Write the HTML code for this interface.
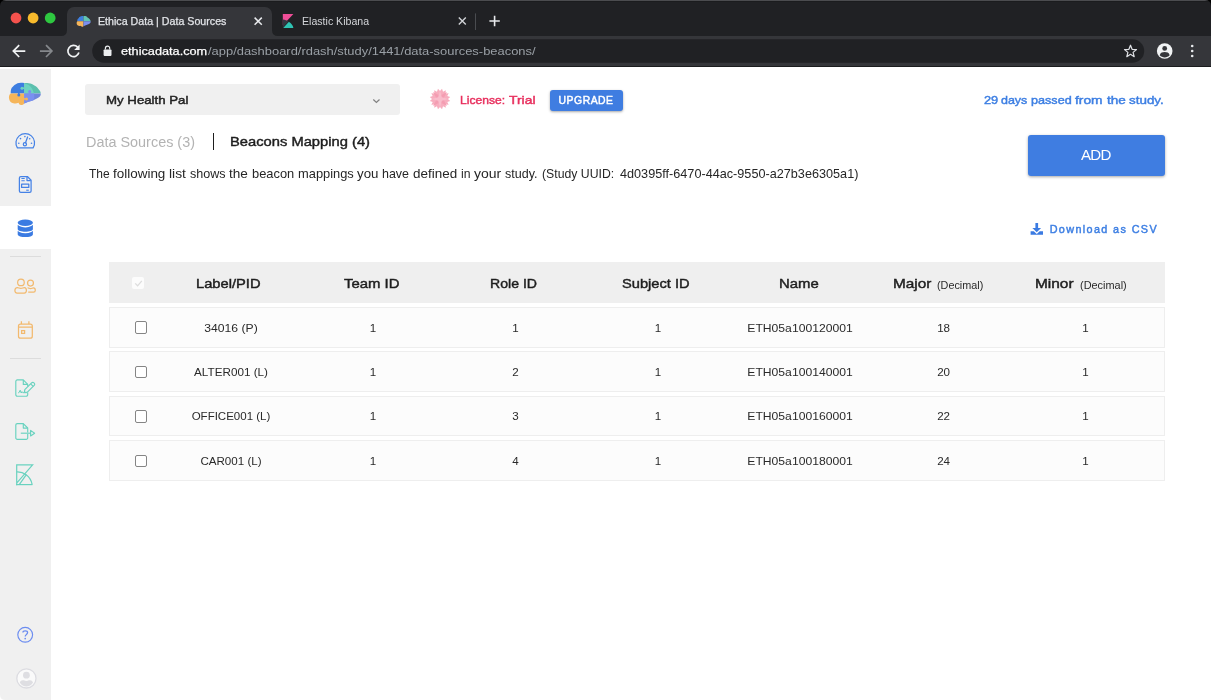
<!DOCTYPE html>
<html><head><meta charset="utf-8"><title>Ethica Data | Data Sources</title>
<style>
html,body{margin:0;padding:0;}
body{width:1211px;height:700px;position:relative;overflow:hidden;background:#fff;font-family:"Liberation Sans",sans-serif;}
#root{position:absolute;left:0;top:0;width:1211px;height:700px;overflow:hidden;will-change:transform;background:#fff;}
.a{position:absolute;}
.t{position:absolute;white-space:nowrap;line-height:20px;height:20px;font-family:"Liberation Sans",sans-serif;}
.t.c{transform:translateX(-50%);font-size:11.6px;color:#2a2a2a;}
svg{position:absolute;overflow:visible;}
/* chrome */
#chrome{left:0;top:0;width:1211px;height:66px;background:#202124;}
#toolbar{left:0;top:36px;width:1211px;height:29.5px;background:#35363a;}
#chromeline{left:0;top:65.5px;width:1211px;height:1.8px;background:#1b1c1e;}
#tab1{left:67px;top:7px;width:205px;height:29px;background:#35363a;border-radius:7px 7px 0 0;}
.tl{width:11px;height:11px;border-radius:50%;top:12.5px;}

/* sidebar */
#side{left:0;top:69px;width:51px;height:631px;background:#f0f0f0;}
#sideact{left:0;top:205.8px;width:51px;height:43.7px;background:#fff;}
.sep{left:10.2px;width:30.8px;height:1.4px;background:#dcdcdc;}
/* content */
#sel{left:85.3px;top:84.3px;width:314.5px;height:31px;background:#f0f0f0;border-radius:3px;}
#upg{left:549.6px;top:90.1px;width:73.2px;height:20.6px;background:#3f7de1;border-radius:3px;box-shadow:0 1px 2.5px rgba(0,0,0,.35);}
#add{left:1028.2px;top:135px;width:136.8px;height:41.2px;background:#3f7de1;border-radius:3px;box-shadow:0 1px 3px rgba(0,0,0,.35);}
#bar{left:212.6px;top:133.3px;width:1.9px;height:16.9px;background:#1e1e1e;}
#thead{left:109.4px;top:262.4px;width:1055.4px;height:40.4px;background:#efefef;}
.row{left:109.4px;width:1053.4px;height:38.3px;background:#fcfcfc;border:1px solid #eeeeee;}
.cb{left:134.7px;width:10.4px;height:10.4px;border:1px solid #858585;border-radius:2px;background:#fff;}
#hcb{left:132.2px;top:277.3px;width:12.2px;height:11.8px;background:#fcfcfc;border-radius:2px;}

</style></head><body>
<div id="root">
<div id="chrome" class="a"></div>
<div id="toolbar" class="a"></div>
<div id="chromeline" class="a"></div>
<div id="tab1" class="a"></div>
<svg style="left:0;top:0" width="1211" height="70" viewBox="0 0 1211 70">
  <!-- tab1 bottom flares -->
  <path d="M61 36 Q67 36 67 30 L67 36 Z" fill="#35363a"/>
  <path d="M278 36 Q272 36 272 30 L272 36 Z" fill="#35363a"/>
  <rect x="0" y="0" width="1211" height="1" fill="#4b4c4f"/><rect x="0" y="1" width="1211" height="1" fill="#1b1c1e"/>
  <!-- window corners -->
  <path d="M0 0 H6 Q0 0 0 6 Z" fill="#000"/>
  <path d="M1211 0 H1205 Q1211 0 1211 6 Z" fill="#000"/>
  <!-- traffic lights -->
  <circle cx="16" cy="18" r="5.4" fill="#f4524d"/>
  <circle cx="33.1" cy="18" r="5.4" fill="#f8bb2c"/>
  <circle cx="50.2" cy="18" r="5.4" fill="#2ec840"/>
  <!-- tab1 favicon (brain) -->
  <g transform="translate(76.6,15.9) scale(0.445,0.5)">
    <path d="M15.4 0.6 C10 -0.4 6 2 4.6 4.6 C2 6 1.4 8.4 1.6 10.8 H15.4 Z" fill="#3f7fe0"/>
    <path d="M15.4 0.6 C19 -0.2 22.4 1 24.6 3 C28.4 4.6 31.4 8 31.6 10.8 H15.4 Z" fill="#62c4b2"/>
    <path d="M1.6 10.8 C-0.4 12.4 -0.6 16.6 2 18.6 C4.6 20.6 8 20.4 9.6 19.6 C10.4 21.6 13 22.4 15.4 20.6 V10.8 Z" fill="#f5b55a"/>
    <path d="M31.6 10.8 C32.2 13.4 30 15.6 26.6 16.6 C22.4 17.6 18.4 19 15.4 20.6 V10.8 Z" fill="#7a8fee"/>
  </g>
  <!-- tab1 close -->
  <path d="M254.6 17.6 L261.8 24.8 M261.8 17.6 L254.6 24.8" stroke="#e8eaed" stroke-width="1.5" fill="none"/>
  <!-- kibana favicon -->
  <path d="M282.8 14 H293.4 L282.8 25.2 Z" fill="#f04e98"/>
  <path d="M282.8 19.4 C285 19.6 287 20.4 288.4 21.4 L282.8 27.4 Z" fill="#343741"/>
  <path d="M288.9 21.8 C291.2 23.2 292.9 25.4 293.4 27.9 H283.2 Z" fill="#2fc4b4"/>
  <!-- tab2 close -->
  <path d="M458.8 17.6 L465.8 24.6 M465.8 17.6 L458.8 24.6" stroke="#d0d2d6" stroke-width="1.4" fill="none"/>
  <!-- separator -->
  <rect x="475" y="13.4" width="1" height="16.6" fill="#4a4c50"/>
  <!-- plus -->
  <path d="M489.4 21 H499.8 M494.6 15.8 V26.2" stroke="#e8eaed" stroke-width="1.6" fill="none"/>
  <!-- back -->
  <path d="M25.3 51.1 H13.6 M19.2 45.2 L13.3 51.1 L19.2 57" stroke="#f1f3f4" stroke-width="1.7" fill="none"/>
  <!-- forward -->
  <path d="M39.9 51.1 H51.6 M46 45.2 L51.9 51.1 L46 57" stroke="#85888c" stroke-width="1.7" fill="none"/>
  <!-- reload -->
  <path d="M77.6 47.2 A5.6 5.6 0 1 0 78.9 52.6" stroke="#f1f3f4" stroke-width="1.7" fill="none"/>
  <path d="M79.6 44.6 V50 H74.2 Z" fill="#f1f3f4"/>
  <!-- omnibox -->
  <rect x="92.2" y="39.2" width="1052" height="23.6" rx="11.8" fill="#202124"/>
  <!-- lock -->
  <rect x="103.6" y="49.4" width="7.9" height="6.5" rx="0.8" fill="#eceef0"/>
  <path d="M105.4 49.6 V48.2 A2.15 2.15 0 0 1 109.7 48.2 V49.6" stroke="#eceef0" stroke-width="1.2" fill="none"/>
  <!-- star -->
  <path d="M1130.5 45.2 L1132.1 49.3 L1136.5 49.6 L1133.1 52.4 L1134.2 56.7 L1130.5 54.3 L1126.8 56.7 L1127.9 52.4 L1124.5 49.6 L1128.9 49.3 Z" stroke="#dfe1e5" stroke-width="1.2" fill="none" stroke-linejoin="round"/>
  <!-- profile -->
  <circle cx="1164.7" cy="51" r="7.8" fill="#f1f3f4"/>
  <circle cx="1164.7" cy="48.4" r="2.4" fill="#35363a"/>
  <path d="M1159.7 55.2 C1160.4 52.6 1162.6 52 1164.7 52 C1166.8 52 1169 52.6 1169.7 55.2 C1168.4 56.6 1166.6 57.4 1164.7 57.4 C1162.8 57.4 1161 56.6 1159.7 55.2 Z" fill="#35363a"/>
  <!-- dots -->
  <circle cx="1192.2" cy="46" r="1.3" fill="#e8eaed"/>
  <circle cx="1192.2" cy="51" r="1.3" fill="#e8eaed"/>
  <circle cx="1192.2" cy="56" r="1.3" fill="#e8eaed"/>
</svg>
<div id="side" class="a"></div>
<div id="sideact" class="a"></div>
<div class="a sep" style="top:255.9px"></div>
<div class="a sep" style="top:357.6px"></div>
<svg style="left:0;top:0" width="52" height="700" viewBox="0 0 52 700">
  <!-- brain logo -->
  <path d="M24.3 83 C21 82.5 19 82.7 17.5 83.2 C15 84.4 13.6 85.6 12.8 86.8 C11.2 88 10.6 90 10.7 93.4 H24.3 Z" fill="#3d7de0"/>
  <path d="M24.3 83 C26 82.8 27.6 83 28.8 83.3 C31 83.6 33 84.4 34.4 85.5 C36.4 86.5 38 88 38.8 89.6 C40 90.8 40.7 92 40.7 93.4 H24.3 Z" fill="#5cc0ae"/>
  <path d="M24.3 83.4 C26 83.6 28 84.4 29 85.2 C31.4 86.6 33 90 34 93.4 H24.3 Z" fill="#6dd3c1"/>
  <path d="M10.7 93.4 C9 94.5 8.6 97 9.2 99.2 C9.8 101.6 11.6 103.2 14.3 103.5 C16 103.6 17.6 103.2 18.6 102.8 C19 104.2 19.8 105 21 105 C22.4 105 23.4 104.4 24.3 103.4 V93.4 Z" fill="#f5b55a"/>
  <path d="M24.3 93.4 H40.7 C41 95 40.2 96.4 38.6 97.6 C37 98.8 35 99.8 32.8 100.4 C29.6 101.2 26.6 102.2 24.3 103.4 Z" fill="#6f86dc"/>
  <path d="M24.3 93.4 H34 C34.6 96 34.4 98.4 33.4 100.2 C30 101.1 26.8 102.1 24.3 103.4 Z" fill="#7a90f0"/>
  <circle cx="18.8" cy="95" r="1.5" fill="#3d7de0"/><rect x="18" y="93" width="1.6" height="1.4" fill="#3d7de0"/>
  <circle cx="22" cy="88.2" r="1.5" fill="#6dd3c1"/><rect x="22.6" y="87.4" width="2" height="1.6" fill="#6dd3c1"/>
  <circle cx="29.6" cy="91.5" r="1.5" fill="#7a90f0"/><rect x="28.8" y="92" width="1.6" height="1.6" fill="#7a90f0"/>
  <circle cx="26.5" cy="98.9" r="1.5" fill="#f5b55a"/><rect x="24" y="98.1" width="1.6" height="1.6" fill="#f5b55a"/>
  <!-- tachometer -->
  <g stroke="#4582e6" fill="none" stroke-width="1.25">
    <path d="M17.4 147.9 A9.3 9.3 0 1 1 33.1 147.9 Z" stroke-linejoin="round"/>
    <circle cx="24.9" cy="144.3" r="1.6"/>
    <path d="M25.5 142.8 L27.6 137" stroke-linecap="round"/>
  </g>
  <g fill="#4582e6">
    <circle cx="20.5" cy="138.6" r="0.8"/><circle cx="24.9" cy="136.6" r="0.8"/><circle cx="29.7" cy="138.7" r="0.8"/>
    <circle cx="18.8" cy="143.2" r="0.8"/><circle cx="31.5" cy="143.2" r="0.8"/>
  </g>
  <!-- file invoice -->
  <g stroke="#4582e6" fill="none" stroke-width="1.25" stroke-linejoin="round">
    <path d="M20.8 176.5 H27.4 L31.1 180.2 V191 A1.4 1.4 0 0 1 29.7 192.4 H20.8 A1.4 1.4 0 0 1 19.4 191 V177.9 A1.4 1.4 0 0 1 20.8 176.5 Z"/>
    <path d="M27 176.8 V180.6 H30.8"/>
    <path d="M21.4 178.5 H24.7 M21.4 180.8 H24.7" stroke-width="1.1"/>
    <rect x="21.6" y="184.2" width="7.2" height="3.2"/>
    <path d="M26.2 190.2 H28.8" stroke-width="1.1"/>
  </g>
  <!-- database -->
  <g>
    <path d="M17.7 231 V234.2 C17.7 238 32.9 238 32.9 234.2 V231 Z" fill="#3b7be2"/>
    <ellipse cx="25.3" cy="229.2" rx="8.4" ry="4.1" fill="#fff"/>
    <path d="M17.7 225 V229 C17.7 232.6 32.9 232.6 32.9 229 V225 Z" fill="#3b7be2"/>
    <ellipse cx="25.3" cy="223" rx="8.4" ry="4.4" fill="#fff"/>
    <ellipse cx="25.3" cy="222.7" rx="7.6" ry="3.2" fill="#3b7be2"/>
  </g>
  <!-- users -->
  <g stroke="#f2b96e" fill="none" stroke-width="1.22">
    <circle cx="20.95" cy="282.4" r="3.3"/>
    <path d="M17.4 287.7 C18.6 287.7 19.4 288.4 20.9 288.4 C22.4 288.4 23.2 287.7 24.4 287.7 C25.9 287.7 26.4 289 26.4 290.6 C26.4 292.2 25.7 293.1 24.2 293.1 H17.1 C15.6 293.1 14.9 292.2 14.9 290.6 C14.9 289 15.9 287.7 17.4 287.7 Z"/>
    <circle cx="30.5" cy="283.1" r="2.95"/>
    <path d="M27.6 288 C28.6 287.8 29.4 288.6 30.6 288.6 C31.8 288.6 32.4 287.9 33.4 287.9 C34.7 287.9 35.3 289 35.3 290.2 C35.3 291.4 34.7 292.1 33.5 292.1 H28.2"/>
  </g>
  <!-- calendar -->
  <g stroke="#f2b96e" fill="none" stroke-width="1.25">
    <rect x="18.5" y="324" width="13.8" height="14.2" rx="2"/>
    <path d="M18.5 327.2 H32.3 M21.4 321.3 V324 M28.9 321.3 V324"/>
    <rect x="21.6" y="330.6" width="3" height="2.8"/>
  </g>
  <!-- file signature -->
  <g stroke="#69d2bf" fill="none" stroke-width="1.15" stroke-linejoin="round">
    <path d="M27.7 386.4 V384.3 L23.3 379.9 H17.3 A1.5 1.5 0 0 0 15.8 381.4 V394.7 A1.5 1.5 0 0 0 17.3 396.2 H26.2 A1.5 1.5 0 0 0 27.7 394.7 V392.6"/>
    <path d="M23.3 380 V384.4 H27.6"/>
    <path d="M24.4 392.2 L24.8 389.6 L31.6 382.8 A1.6 1.6 0 0 1 33.9 382.8 L34.2 383.1 A1.6 1.6 0 0 1 34.2 385.4 L27.4 392.2 Z"/>
    <path d="M30.6 383.8 L33.2 386.4"/>
    <path d="M18.2 392.8 H18.8 L20.2 390.2 L21.2 393 L22 391.6 L22.8 392.7 H26.8" stroke-width="1"/>
  </g>
  <!-- file export -->
  <g stroke="#69d2bf" fill="none" stroke-width="1.15" stroke-linejoin="round">
    <path d="M27.7 432.4 V428 L23.3 423.6 H17.3 A1.5 1.5 0 0 0 15.8 425.1 V437.9 A1.5 1.5 0 0 0 17.3 439.4 H26.2 A1.5 1.5 0 0 0 27.7 437.9 V434"/>
    <path d="M23.3 423.7 V428.1 H27.6"/>
    <path d="M20.8 433.2 H30.6"/>
    <path d="M30.6 430.4 L34.6 433.2 L30.6 436 Z"/>
  </g>
  <!-- kibana -->
  <g stroke="#69d2bf" fill="none" stroke-width="1.2">
    <path d="M16.7 485.2 V464.8 H32.6 L16.9 482.8"/>
    <path d="M16.1 484.6 H32.4"/>
    <path d="M16.7 472 C23 471.6 30.4 475.6 32.2 484.6"/>
    <path d="M26.4 474.6 L19.4 484.4"/>
  </g>
  <path d="M0 700 V694.5 Q0 700 5.5 700 Z" fill="#fff"/>
  <!-- help -->
  <circle cx="25.2" cy="634.8" r="7.4" stroke="#6b8cf0" stroke-width="1.15" fill="none"/>
  <path d="M22.9 632.6 C22.9 630.2 27.6 630.2 27.6 632.6 C27.6 634.4 25.2 634.4 25.2 636.4" stroke="#6b8cf0" stroke-width="1.25" fill="none"/>
  <circle cx="25.2" cy="638.6" r="0.85" fill="#6b8cf0"/>
  <!-- avatar -->
  <circle cx="26.4" cy="678.4" r="9.6" fill="#fafafa" stroke="#dcdce1" stroke-width="1.3"/>
  <circle cx="26.4" cy="675.2" r="3.4" fill="#dedee2"/>
  <path d="M19.8 682.6 C20.4 680.4 22.4 680.2 24 680.2 C25 681.2 27.8 681.2 28.8 680.2 C30.4 680.2 32.4 680.4 33 682.6 C31.6 685.4 29 686.6 26.4 686.6 C23.8 686.6 21.2 685.4 19.8 682.6 Z" fill="#dedee2"/>
</svg>
<div id="sel" class="a"></div>
<div id="upg" class="a"></div>
<div id="add" class="a"></div>
<div id="bar" class="a"></div>
<div id="thead" class="a"></div>
<div id="hcb" class="a"></div>
<div class="a row" style="top:307.4px"></div>
<div class="a row" style="top:351.4px"></div>
<div class="a row" style="top:395.8px"></div>
<div class="a row" style="top:440.3px"></div>
<div class="a cb" style="top:321.4px"></div>
<div class="a cb" style="top:365.8px"></div>
<div class="a cb" style="top:410.2px"></div>
<div class="a cb" style="top:454.5px"></div>
<svg style="left:0;top:0" width="1211" height="700" viewBox="0 0 1211 700">
  <!-- select chevron -->
  <path d="M373.3 99.5 L376.4 102.4 L379.5 99.5" stroke="#828282" stroke-width="1.25" fill="none"/>
  <!-- license badge -->
  <polygon points="442.03,88.80 443.02,91.70 445.78,90.35 445.59,93.41 448.65,93.22 447.30,95.98 450.20,96.97 447.90,99.00 450.20,101.03 447.30,102.02 448.65,104.78 445.59,104.59 445.78,107.65 443.02,106.30 442.03,109.20 440.00,106.90 437.97,109.20 436.98,106.30 434.22,107.65 434.41,104.59 431.35,104.78 432.70,102.02 429.80,101.03 432.10,99.00 429.80,96.97 432.70,95.98 431.35,93.22 434.41,93.41 434.22,90.35 436.98,91.70 437.97,88.80 440.00,91.10" fill="#f7adbe"/>
  <polygon points="446.93,92.07 443.20,99.00 446.93,105.93 440.00,102.20 433.07,105.93 436.80,99.00 433.07,92.07 440.00,95.80" fill="#f49db2"/>
  <polygon points="440.00,90.20 441.84,97.16 448.80,99.00 441.84,100.84 440.00,107.80 438.16,100.84 431.20,99.00 438.16,97.16" fill="#f9bccb"/>
  <!-- header checkbox check -->
  <path d="M135.2 283.4 L137.6 285.8 L141.8 280.8" stroke="#dddddd" stroke-width="1.3" fill="none"/>
  <!-- download icon -->
  <g fill="#3b7be2">
    <rect x="1035.4" y="223" width="2.7" height="5.4"/>
    <path d="M1032.4 228 H1041.1 L1036.75 232.3 Z"/>
    <path d="M1030.6 231.3 H1033.8 L1036.75 234.1 L1039.7 231.3 H1043 V234.8 H1030.6 Z"/>
  </g>
</svg>

<span id="t_tab1" class="t" style="left:97.60px;top:11.00px;font-size:10.7px;font-weight:400;-webkit-text-stroke:0.25px #e2e4e8;color:#e2e4e8;transform-origin:0 50%;transform:scaleX(0.9975);">Ethica Data | Data Sources</span><span id="t_tab2" class="t" style="left:301.60px;top:11.00px;font-size:10.7px;font-weight:400;color:#d4d6da;transform-origin:0 50%;transform:scaleX(0.9906);">Elastic Kibana</span><span id="t_url1" class="t" style="left:121.40px;top:41.00px;font-size:11.8px;font-weight:400;-webkit-text-stroke:0.25px #ffffff;color:#ffffff;transform-origin:0 50%;transform:scaleX(1.0773);">ethicadata.com</span><span id="t_url2" class="t" style="left:207.90px;top:41.00px;font-size:11.8px;font-weight:400;color:#9aa0a6;transform-origin:0 50%;transform:scaleX(1.0954);">/app/dashboard/rdash/study/1441/data-sources-beacons/</span><span id="t_sel" class="t" style="left:106.00px;top:89.70px;font-size:11.8px;font-weight:400;-webkit-text-stroke:0.45px #222;color:#222;transform-origin:0 50%;transform:scaleX(1.1220);">My Health Pal</span><span id="t_upg" class="t" style="left:558.60px;top:90.90px;font-size:10.4px;font-weight:400;-webkit-text-stroke:0.45px #fff;color:#fff;letter-spacing:0.509px;">UPGRADE</span><span id="t_ds" class="t" style="left:86.00px;top:132.60px;font-size:13.8px;font-weight:400;color:#b3b3b3;transform-origin:0 50%;transform:scaleX(1.0451);">Data Sources (3)</span><span id="t_bm" class="t" style="left:230.00px;top:132.30px;font-size:13.6px;font-weight:400;-webkit-text-stroke:0.45px #1e1e1e;color:#1e1e1e;transform-origin:0 50%;transform:scaleX(1.0834);">Beacons Mapping (4)</span><span id="t_descB" class="t" style="left:542.20px;top:163.60px;font-size:12.1px;font-weight:400;color:#262626;transform-origin:0 50%;transform:scaleX(1.0136);">(Study UUID:</span><span id="t_descC" class="t" style="left:619.60px;top:163.60px;font-size:12.1px;font-weight:400;color:#262626;transform-origin:0 50%;transform:scaleX(1.0468);">4d0395ff-6470-44ac-9550-a27b3e6305a1)</span><span id="t_add" class="t" style="left:1080.90px;top:145.40px;font-size:15.1px;font-weight:400;color:#fff;letter-spacing:-0.710px;">ADD</span><span id="t_dl" class="t" style="left:1049.70px;top:219.00px;font-size:10.8px;font-weight:400;-webkit-text-stroke:0.45px #3d7fe3;color:#3d7fe3;letter-spacing:1.378px;">Download as CSV</span><span id="h_label" class="t" style="left:196.00px;top:273.70px;font-size:13.5px;font-weight:400;-webkit-text-stroke:0.45px #1e1e1e;color:#1e1e1e;transform-origin:0 50%;transform:scaleX(1.0877);">Label/PID</span><span id="h_team" class="t" style="left:343.50px;top:273.70px;font-size:13.5px;font-weight:400;-webkit-text-stroke:0.45px #1e1e1e;color:#1e1e1e;transform-origin:0 50%;transform:scaleX(1.1041);">Team ID</span><span id="h_role" class="t" style="left:489.70px;top:273.70px;font-size:13.5px;font-weight:400;-webkit-text-stroke:0.45px #1e1e1e;color:#1e1e1e;transform-origin:0 50%;transform:scaleX(1.0441);">Role ID</span><span id="h_subj" class="t" style="left:621.70px;top:273.70px;font-size:13.5px;font-weight:400;-webkit-text-stroke:0.45px #1e1e1e;color:#1e1e1e;transform-origin:0 50%;transform:scaleX(1.0854);">Subject ID</span><span id="h_name" class="t" style="left:778.50px;top:273.70px;font-size:13.5px;font-weight:400;-webkit-text-stroke:0.45px #1e1e1e;color:#1e1e1e;transform-origin:0 50%;transform:scaleX(1.1023);">Name</span><span id="h_major" class="t" style="left:893.20px;top:273.70px;font-size:13.5px;font-weight:400;-webkit-text-stroke:0.45px #1e1e1e;color:#1e1e1e;transform-origin:0 50%;transform:scaleX(1.1373);">Major</span><span id="h_majd" class="t" style="left:937.30px;top:274.60px;font-size:10.6px;font-weight:400;color:#2a2a2a;transform-origin:0 50%;transform:scaleX(1.0214);">(Decimal)</span><span id="h_minor" class="t" style="left:1035.40px;top:273.70px;font-size:13.5px;font-weight:400;-webkit-text-stroke:0.45px #1e1e1e;color:#1e1e1e;transform-origin:0 50%;transform:scaleX(1.1432);">Minor</span><span id="h_mind" class="t" style="left:1080.00px;top:274.60px;font-size:10.6px;font-weight:400;color:#2a2a2a;transform-origin:0 50%;transform:scaleX(1.0303);">(Decimal)</span><span id="wd0" class="t" style="left:89.30px;top:163.60px;font-size:12.1px;font-weight:400;color:#262626;transform-origin:0 50%;transform:scaleX(0.9916);white-space:pre;">The </span><span id="wd1" class="t" style="left:113.30px;top:163.60px;font-size:12.1px;font-weight:400;color:#262626;transform-origin:0 50%;transform:scaleX(1.1126);white-space:pre;">following </span><span id="wd2" class="t" style="left:169.40px;top:163.60px;font-size:12.1px;font-weight:400;color:#262626;transform-origin:0 50%;transform:scaleX(1.1466);white-space:pre;">list </span><span id="wd3" class="t" style="left:190.20px;top:163.60px;font-size:12.1px;font-weight:400;color:#262626;transform-origin:0 50%;transform:scaleX(1.0388);white-space:pre;">shows </span><span id="wd4" class="t" style="left:229.30px;top:163.60px;font-size:12.1px;font-weight:400;color:#262626;transform-origin:0 50%;transform:scaleX(1.1245);white-space:pre;">the </span><span id="wd5" class="t" style="left:252.00px;top:163.60px;font-size:12.1px;font-weight:400;color:#262626;transform-origin:0 50%;transform:scaleX(1.0640);white-space:pre;">beacon </span><span id="wd6" class="t" style="left:297.80px;top:163.60px;font-size:12.1px;font-weight:400;color:#262626;transform-origin:0 50%;transform:scaleX(1.0643);white-space:pre;">mappings </span><span id="wd7" class="t" style="left:357.20px;top:163.60px;font-size:12.1px;font-weight:400;color:#262626;transform-origin:0 50%;transform:scaleX(1.0980);white-space:pre;">you </span><span id="wd8" class="t" style="left:382.30px;top:163.60px;font-size:12.1px;font-weight:400;color:#262626;transform-origin:0 50%;transform:scaleX(1.0306);white-space:pre;">have </span><span id="wd9" class="t" style="left:412.80px;top:163.60px;font-size:12.1px;font-weight:400;color:#262626;transform-origin:0 50%;transform:scaleX(1.1127);white-space:pre;">defined </span><span id="wd10" class="t" style="left:460.70px;top:163.60px;font-size:12.1px;font-weight:400;color:#262626;transform-origin:0 50%;transform:scaleX(1.0093);white-space:pre;">in </span><span id="wd11" class="t" style="left:473.60px;top:163.60px;font-size:12.1px;font-weight:400;color:#262626;transform-origin:0 50%;transform:scaleX(1.1565);white-space:pre;">your </span><span id="wd12" class="t" style="left:504.70px;top:163.60px;font-size:12.1px;font-weight:400;color:#262626;transform-origin:0 50%;transform:scaleX(1.0359);white-space:pre;">study.</span><span id="wl0" class="t" style="left:460.40px;top:90.00px;font-size:11.8px;font-weight:400;-webkit-text-stroke:0.45px #e8305e;color:#e8305e;transform-origin:0 50%;transform:scaleX(1.0250);white-space:pre;">License: </span><span id="wl1" class="t" style="left:508.80px;top:90.00px;font-size:11.8px;font-weight:400;-webkit-text-stroke:0.45px #e8305e;color:#e8305e;transform-origin:0 50%;transform:scaleX(1.1778);white-space:pre;">Trial</span><span id="wy0" class="t" style="left:983.60px;top:90.00px;font-size:11.8px;font-weight:400;-webkit-text-stroke:0.45px #3d7fe3;color:#3d7fe3;transform-origin:0 50%;transform:scaleX(1.0850);white-space:pre;">29 </span><span id="wy1" class="t" style="left:1001.40px;top:90.00px;font-size:11.8px;font-weight:400;-webkit-text-stroke:0.45px #3d7fe3;color:#3d7fe3;transform-origin:0 50%;transform:scaleX(1.0566);white-space:pre;">days </span><span id="wy2" class="t" style="left:1031.20px;top:90.00px;font-size:11.8px;font-weight:400;-webkit-text-stroke:0.45px #3d7fe3;color:#3d7fe3;transform-origin:0 50%;transform:scaleX(1.0695);white-space:pre;">passed </span><span id="wy3" class="t" style="left:1075.40px;top:90.00px;font-size:11.8px;font-weight:400;-webkit-text-stroke:0.45px #3d7fe3;color:#3d7fe3;transform-origin:0 50%;transform:scaleX(1.1684);white-space:pre;">from </span><span id="wy4" class="t" style="left:1106.80px;top:90.00px;font-size:11.8px;font-weight:400;-webkit-text-stroke:0.45px #3d7fe3;color:#3d7fe3;transform-origin:0 50%;transform:scaleX(1.1479);white-space:pre;">the </span><span id="wy5" class="t" style="left:1129.40px;top:90.00px;font-size:11.8px;font-weight:400;-webkit-text-stroke:0.45px #3d7fe3;color:#3d7fe3;transform-origin:0 50%;transform:scaleX(1.1369);white-space:pre;">study.</span><span id="c0_0" class="t c" style="left:230.80px;top:317.60px;transform:translateX(-50%) scaleX(1.0506);">34016 (P)</span><span id="c0_1" class="t c" style="left:373.00px;top:317.60px;transform:translateX(-50%) scaleX(1.0000);">1</span><span id="c0_2" class="t c" style="left:515.50px;top:317.60px;transform:translateX(-50%) scaleX(1.0000);">1</span><span id="c0_3" class="t c" style="left:658.00px;top:317.60px;transform:translateX(-50%) scaleX(1.0000);">1</span><span id="c0_4" class="t c" style="left:800.30px;top:317.60px;transform:translateX(-50%) scaleX(1.0481);">ETH05a100120001</span><span id="c0_5" class="t c" style="left:943.60px;top:317.60px;transform:translateX(-50%) scaleX(1.0000);">18</span><span id="c0_6" class="t c" style="left:1085.40px;top:317.60px;transform:translateX(-50%) scaleX(1.0000);">1</span><span id="c1_0" class="t c" style="left:230.80px;top:361.90px;transform:translateX(-50%) scaleX(1.0089);">ALTER001 (L)</span><span id="c1_1" class="t c" style="left:373.00px;top:361.90px;transform:translateX(-50%) scaleX(1.0000);">1</span><span id="c1_2" class="t c" style="left:515.50px;top:361.90px;transform:translateX(-50%) scaleX(1.0000);">2</span><span id="c1_3" class="t c" style="left:658.00px;top:361.90px;transform:translateX(-50%) scaleX(1.0000);">1</span><span id="c1_4" class="t c" style="left:800.30px;top:361.90px;transform:translateX(-50%) scaleX(1.0481);">ETH05a100140001</span><span id="c1_5" class="t c" style="left:943.60px;top:361.90px;transform:translateX(-50%) scaleX(1.0000);">20</span><span id="c1_6" class="t c" style="left:1085.40px;top:361.90px;transform:translateX(-50%) scaleX(1.0000);">1</span><span id="c2_0" class="t c" style="left:230.80px;top:406.30px;transform:translateX(-50%) scaleX(0.9931);">OFFICE001 (L)</span><span id="c2_1" class="t c" style="left:373.00px;top:406.30px;transform:translateX(-50%) scaleX(1.0000);">1</span><span id="c2_2" class="t c" style="left:515.50px;top:406.30px;transform:translateX(-50%) scaleX(1.0000);">3</span><span id="c2_3" class="t c" style="left:658.00px;top:406.30px;transform:translateX(-50%) scaleX(1.0000);">1</span><span id="c2_4" class="t c" style="left:800.30px;top:406.30px;transform:translateX(-50%) scaleX(1.0481);">ETH05a100160001</span><span id="c2_5" class="t c" style="left:943.60px;top:406.30px;transform:translateX(-50%) scaleX(1.0000);">22</span><span id="c2_6" class="t c" style="left:1085.40px;top:406.30px;transform:translateX(-50%) scaleX(1.0000);">1</span><span id="c3_0" class="t c" style="left:230.80px;top:450.60px;transform:translateX(-50%) scaleX(0.9997);">CAR001 (L)</span><span id="c3_1" class="t c" style="left:373.00px;top:450.60px;transform:translateX(-50%) scaleX(1.0000);">1</span><span id="c3_2" class="t c" style="left:515.50px;top:450.60px;transform:translateX(-50%) scaleX(1.0000);">4</span><span id="c3_3" class="t c" style="left:658.00px;top:450.60px;transform:translateX(-50%) scaleX(1.0000);">1</span><span id="c3_4" class="t c" style="left:800.30px;top:450.60px;transform:translateX(-50%) scaleX(1.0481);">ETH05a100180001</span><span id="c3_5" class="t c" style="left:943.60px;top:450.60px;transform:translateX(-50%) scaleX(1.0000);">24</span><span id="c3_6" class="t c" style="left:1085.40px;top:450.60px;transform:translateX(-50%) scaleX(1.0000);">1</span>
</div>
</body></html>
